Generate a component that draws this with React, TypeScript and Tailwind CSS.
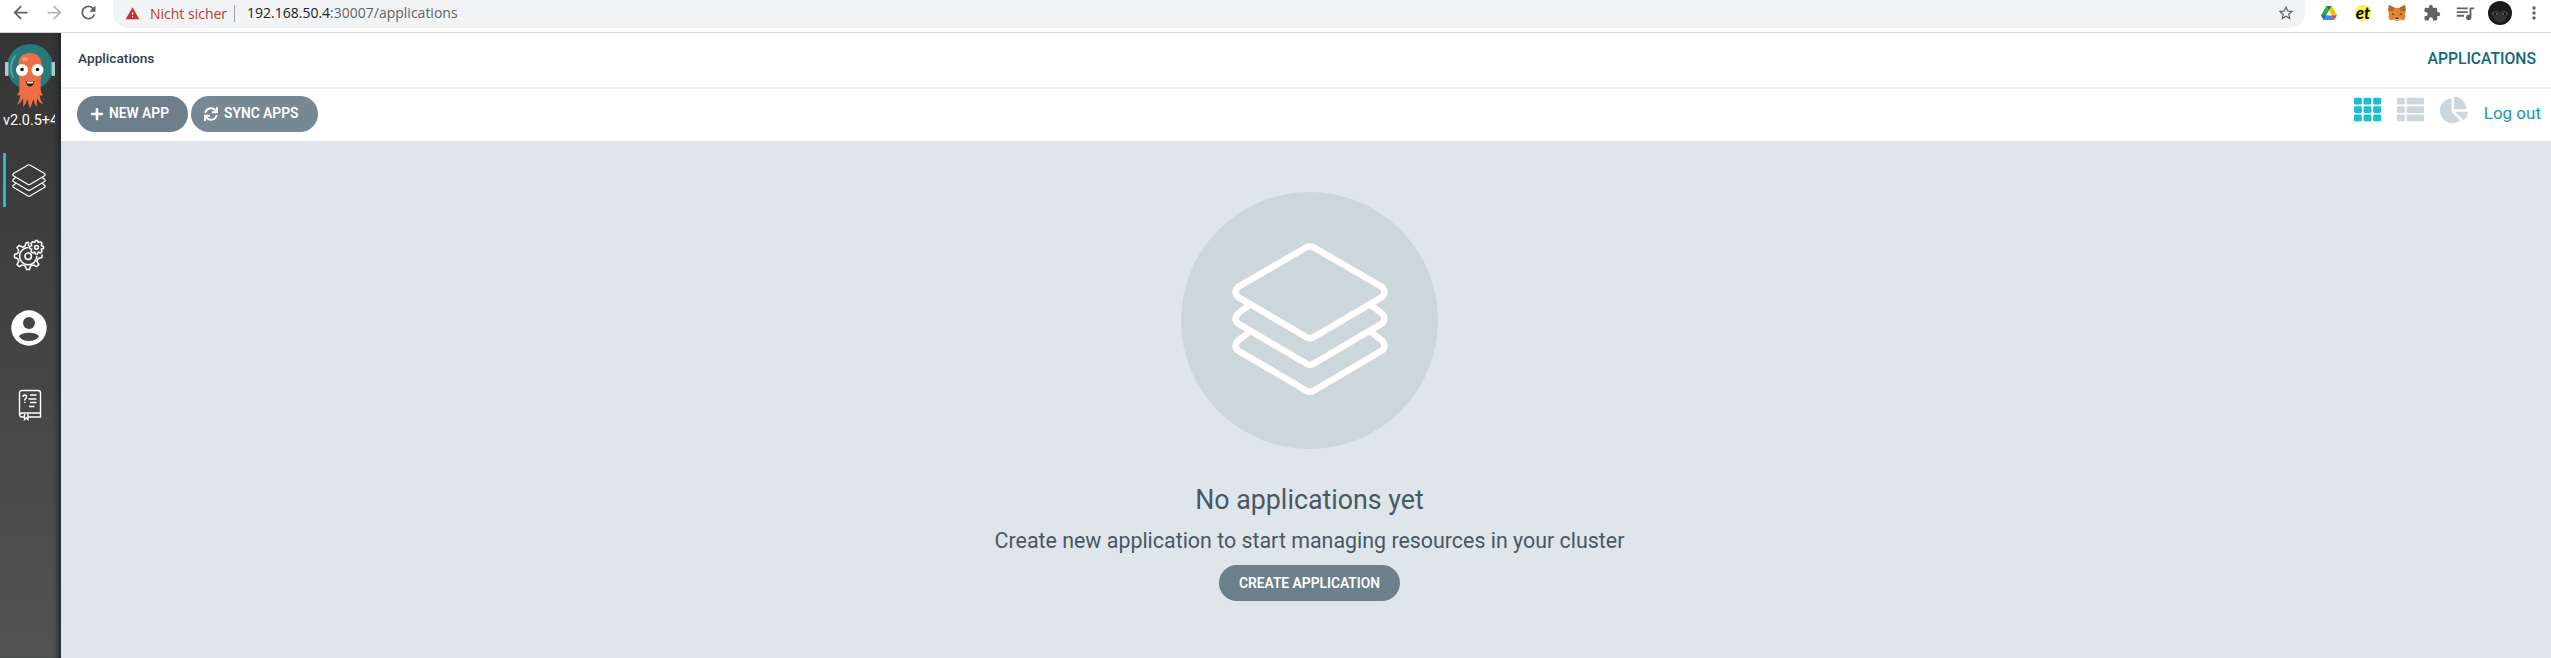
import type { ReactNode } from "react";
import { FaChartPie, FaPlus, FaSync, FaTh, FaThList } from "react-icons/fa";
import {
  MdArrowBack,
  MdArrowForward,
  MdExtension,
  MdMoreVert,
  MdQueueMusic,
  MdRefresh,
  MdStarBorder,
  MdWarning,
} from "react-icons/md";

function Layers({ className, stroke }: { className: string; stroke: number }) {
  return (
    <svg viewBox="0 0 156 152" className={className} fill="none" stroke="white" strokeWidth={stroke} strokeLinejoin="round">
      <path d="M74 4.500Q78 2.500 82 4.500L150 44Q155 49 150 54L82 94Q78 96.500 74 94L6 54Q1 49 6 44Z" />
      <path d="M18 61.500L6 70.500Q1 76 6 80.500L74 120.500Q78 123 82 120.500L150 80.500Q155 76 150 70.500L138 61.500" />
      <path d="M18 88.500L6 97.500Q1 103 6 107.500L74 147.500Q78 150 82 147.500L150 107.500Q155 103 150 97.500L138 88.500" />
    </svg>
  );
}

function Octopus() {
  return (
    <svg viewBox="0 0 50 66" className="h-[66px] w-[50px]">
      <circle cx="25" cy="24" r="23" fill="#277a7c" />
      <rect x="0" y="19" width="3.500" height="14" rx="1" fill="#a9c9d3" />
      <rect x="46.500" y="19" width="3.500" height="14" rx="1" fill="#a9c9d3" />
      <path d="M8 34Q3 23 10 13" fill="none" stroke="#5fa3a6" strokeWidth="1.800" strokeLinecap="round" />
      <path
        d="M13.500 23C13 15 17 10 25 10S37 15 36.500 23L35.500 43Q35.500 50 38 52Q36 53 34.500 52Q35 57 38 61Q34 60 32 55Q31.500 61 32 64Q29 61 28.500 56Q27 61 25 65Q23 61 22.500 56Q21 61 18 64Q18.500 60 18 55Q16 60 12 62Q15 57 15.500 52Q14 53 12 52Q14.500 50 14.500 43Z"
        fill="#ee6f45"
      />
      <ellipse cx="20" cy="16" rx="3" ry="2" fill="#f59a79" />
      <circle cx="17" cy="27" r="6" fill="white" />
      <circle cx="32.500" cy="27" r="6" fill="white" />
      <circle cx="17" cy="26.500" r="1.800" fill="#15151f" />
      <circle cx="32.500" cy="26.500" r="1.800" fill="#15151f" />
      <path d="M20.500 38Q25 40 29.500 38Q28 43.500 25 43.500T20.500 38Z" fill="#2a1616" />
      <path d="M21.500 38.500Q25 40 28.500 38.500L28 40Q25 41 22 40Z" fill="white" />
    </svg>
  );
}

function Gears() {
  return (
    <svg viewBox="0 0 32 32" className="h-8 w-8" fill="none" stroke="white" strokeWidth="1.500" strokeLinejoin="round" strokeLinecap="round">
      <path d="M15.500 6.500V3.500H13.200L12 7L9.300 8.200L6.300 6.300L4 8.600L5.800 11.600L4.600 14.500L1.500 15.500V18.500L4.600 19.500L5.800 22.400L4 25.400L6.300 27.700L9.300 25.900L12.300 27.100L13.500 30.500H16.500L17.500 27.100L20.500 25.900L23.500 27.700L25.800 25.400L24 22.400L25.200 19.500L29 18.500V16" />
      <path d="M15 8.600A8.600 8.600 0 1 0 23.800 17.500" />
      <circle cx="15.200" cy="17.200" r="3.200" />
      <path d="M22.500 1.500H24.500L25.200 3.500L27.500 2.800L29 4.300L28.200 6.500L30.500 7.500V9.500L28.200 10.300L29 12.500L27.500 14L25.200 13L24.500 15H22.500L21.700 13L19.500 14L18 12.500L18.800 10.300L16.700 9.500V7.500L18.800 6.500L18 4.300L19.500 2.800L21.700 3.500Z" />
      <circle cx="23.500" cy="8.300" r="1.900" />
    </svg>
  );
}

function Account() {
  return (
    <svg viewBox="0 0 36 36" className="h-9 w-9">
      <circle cx="18" cy="18" r="17.700" fill="white" />
      <circle cx="18" cy="13" r="6" fill="#464646" />
      <path d="M8 26.500C10 21.500 26 21.500 28 26.500C24 32.500 12 32.500 8 26.500Z" fill="#464646" />
    </svg>
  );
}

function Manual() {
  return (
    <svg viewBox="0 0 24 32" className="h-8 w-6" fill="none" stroke="white" strokeWidth="1.400">
      <path d="M6 28H4Q1.500 28 1.500 25V4Q1.500 1.500 4 1.500H20Q22.500 1.500 22.500 4V28H10M22 24H4Q2 24 1.800 26" />
      <path d="M6.500 25V30.500L8.300 29L10 30.500V25" />
      <path d="M12 6H18.500M10.500 10H18.500M12 13.500H18.500M11 17.500H16.500" />
      <path d="M5 8Q5 6 6.800 6T8.500 8Q8.500 9 6.800 10.500V11.500M6.800 12.800V14" />
    </svg>
  );
}

function Drive() {
  return (
    <svg viewBox="0 0 16 14" className="h-[14px] w-4">
      <path d="M5.300 0H10.700L8 4.700Z" fill="#188038" />
      <path d="M5.300 0L8 4.700L2.700 14L0 9.300Z" fill="#34a853" />
      <path d="M10.700 0L16 9.300H10.700L8 4.700Z" fill="#fbbc04" />
      <path d="M0 9.300H5.400L2.700 14Z" fill="#1967d2" />
      <path d="M5.400 9.300H10.700L13.300 14H2.700Z" fill="#4285f4" />
      <path d="M10.700 9.300H16L13.300 14Z" fill="#ea4335" />
      <path d="M8 4.700L10.700 9.300H5.400Z" fill="white" />
    </svg>
  );
}

function Fox() {
  return (
    <svg viewBox="0 0 18 16" className="h-4 w-[18px]">
      <path d="M1 0L7 3H11L17 0L18 5L17 9L17.500 12L16 15.500L12 14.500L10.500 16H7.500L6 14.500L2 15.500L0.500 12L1 9L0 5Z" fill="#e8832a" />
      <path d="M1 0L7 3L5 6L0.500 6ZM17 0L11 3L13 6L17.500 6Z" fill="#b8622b" />
      <path d="M4 8L7 9.500L4.500 10ZM14 8L11 9.500L13.500 10Z" fill="#343b4a" />
      <path d="M7 12.500H11L11.500 14.500L10 15.500H8L6.500 14.500Z" fill="#c9bdb3" />
      <path d="M7.500 12.500H10.500L10.500 14H7.500Z" fill="#30343d" />
    </svg>
  );
}

function Avatar() {
  return (
    <svg viewBox="0 0 24 24" className="h-6 w-6">
      <circle cx="12" cy="12" r="12" fill="#1b1b1b" />
      <path d="M3 12Q7 8 12 11Q17 8 20 12L17 19Q12 24 7 19Z" fill="#333" />
      <path d="M4 13Q7 10 10 13Q7 15.500 4 13ZM14 13Q17 10 20 13Q17 15.500 14 13Z" fill="#626262" />
      <circle cx="7" cy="13" r="1.200" fill="#111" />
      <circle cx="17" cy="13" r="1.200" fill="#111" />
    </svg>
  );
}

function BrowserBar() {
  return (
    <div className="flex h-[33px] shrink-0 items-start overflow-hidden border-b border-[#d5d7da] bg-white text-[#5f6368]">
      <div className="flex w-[113px] shrink-0 items-center pt-[2px] pl-[10px]">
        <MdArrowBack size={21} />
        <MdArrowForward size={21} className="ml-[13px] text-[#b4b6b9]" />
        <MdRefresh size={21} className="ml-[13px]" />
      </div>
      <div className="-mt-[2px] flex h-[30px] w-[2192px] shrink-0 items-center rounded-b-[15px] bg-[#f1f3f4] pl-3 font-['Open_Sans',sans-serif] text-[14px]">
        <MdWarning size={15} className="text-[#c5362c]" />
        <span className="ml-[10px] w-[77px] whitespace-nowrap text-[#b93a35]">Nicht sicher</span>
        <span className="ml-[7px] h-[17px] w-px bg-[#9aa0a6]" />
        <span className="ml-3 pb-px whitespace-nowrap">
          <span className="text-[#202124]">192.168.50.4</span>:30007/applications
        </span>
        <MdStarBorder size={18} className="mr-[10px] ml-auto" />
      </div>
      <div className="flex h-[25px] items-center">
        <span className="ml-4"><Drive /></span>
        <span className="ml-[18px] flex h-4 w-4 items-center justify-center rounded-full bg-[#fff04a] font-['Lato',sans-serif] text-[17px] leading-none font-bold text-black italic">et</span>
        <span className="ml-[17px]"><Fox /></span>
        <MdExtension size={18} className="ml-[17px]" />
        <MdQueueMusic size={22} className="ml-[13px]" />
        <span className="ml-[12px]"><Avatar /></span>
        <MdMoreVert size={20} className="ml-3" />
      </div>
    </div>
  );
}

function Sidebar() {
  return (
    <nav className="flex w-[61px] shrink-0 flex-col bg-linear-to-b from-[#353535] to-[#535353] shadow-[inset_-6px_0_5px_-3px_#23272b]">
      <div className="flex h-[68px] items-start pt-[10px] pl-[5px]"><Octopus /></div>
      <div className="mt-[11px] ml-[3px] w-[52px] overflow-hidden text-[14.4px] leading-[18px] whitespace-nowrap text-white">v2.0.5+4</div>
      <div className="mt-[23px] ml-[3px] flex h-[54px] items-center border-l-[3px] border-[#1fbdd0] pl-[6px]">
        <Layers className="h-[33px] w-[34px]" stroke={5.5} />
      </div>
      <div className="mt-[32px] ml-[13px]"><Gears /></div>
      <div className="mt-[39px] ml-[11px]"><Account /></div>
      <div className="mt-[43px] ml-[18px]"><Manual /></div>
    </nav>
  );
}

function PillButton({ children, className }: { children: ReactNode; className: string }) {
  return (
    <button className={`flex h-9 items-center rounded-full text-[13.8px] font-semibold whitespace-nowrap text-white ${className}`}>
      {children}
    </button>
  );
}

export default function App() {
  return (
    <div className="flex h-[658px] w-full flex-col overflow-hidden bg-[#dee6ec] font-['Roboto',sans-serif]">
      <BrowserBar />
      <div className="flex min-h-0 flex-1">
        <Sidebar />
        <div className="flex min-w-0 flex-1 flex-col">
          <header className="flex h-[56px] shrink-0 items-center justify-between border-b-2 border-[#f0f2f3] bg-white pr-[15px] pb-[3px] pl-[17px] font-medium">
            <span className="text-[13.7px] text-[#363c4a]">Applications</span>
            <span className="text-[15.7px] text-[#12697a]">APPLICATIONS</span>
          </header>
          <div className="flex h-[52px] shrink-0 items-center bg-white pb-[3px] pl-4">
            <PillButton className="w-[111px] bg-[#6d7f8b] pl-[13px]">
              <FaPlus size={14} className="mr-[5px]" />
              NEW APP
            </PillButton>
            <PillButton className="ml-[3px] w-[127px] bg-[#768894] pl-[13px]">
              <FaSync size={14} className="mr-[6px]" />
              SYNC APPS
            </PillButton>
            <div className="mr-[10px] ml-auto flex items-center">
              <FaTh size={27} className="mb-[8px] text-[#1fbdd0]" />
              <FaThList size={27} className="mb-[8px] ml-[16px] text-[#ccd6dd]" />
              <FaChartPie size={28} className="mb-[8px] ml-[16px] text-[#ccd6dd]" />
              <span className="ml-4 text-[17px] whitespace-nowrap text-[#2397a8]">Log out</span>
            </div>
          </div>
          <main className="flex flex-1 flex-col items-center pl-[7px] text-[#495763]">
            <div className="mt-[51px] flex h-[257px] w-[257px] shrink-0 items-center justify-center rounded-full bg-[#ccd6dd] pb-[4px]">
              <Layers className="h-[152px] w-[156px]" stroke={6.5} />
            </div>
            <h1 className="mt-[33px] text-[26.8px] leading-9 whitespace-nowrap">No applications yet</h1>
            <p className="mt-[9px] text-[21.4px] leading-7 whitespace-nowrap">Create new application to start managing resources in your cluster</p>
            <PillButton className="mt-[10px] w-[181px] justify-center bg-[#6d7f8b]">CREATE APPLICATION</PillButton>
          </main>
        </div>
      </div>
    </div>
  );
}
